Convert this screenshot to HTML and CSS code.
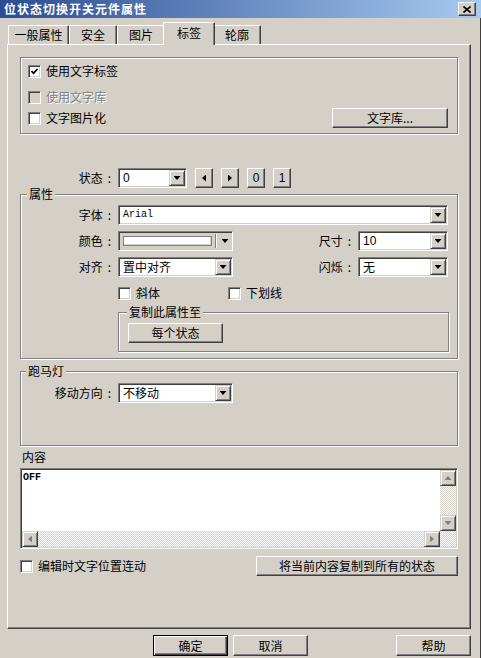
FILE: index.html
```html
<!DOCTYPE html>
<html lang="zh-CN">
  <head>
    <meta charset="UTF-8" />
    <title>位状态切换开关元件属性</title>
    <link rel="stylesheet" href="styles.css">
  </head>
  <body>
    <div class="titlebar">
      <span class="title">位状态切换开关元件属性</span>
      <span class="close">
        <svg width="8" height="7" viewBox="0 0 8 7"><path d="M0.5 0.5 L7.5 6.5 M7.5 0.5 L0.5 6.5" stroke="#000" stroke-width="1.6" fill="none"/></svg>
      </span>
    </div>

    <div class="window">
      <div class="tabs">
        <div class="tab first">一般属性</div>
        <div class="tab">安全</div>
        <div class="tab">图片</div>
        <div class="tab active">标签</div>
        <div class="tab">轮廓</div>
      </div>

      <div class="panel">
        <div class="group text-label">
          <div class="check-row">
            <span class="check">
              <svg width="7" height="7" viewBox="0 0 7 7"><path d="M0.5 3 L2.5 5.2 L6.5 1" stroke="#000" stroke-width="1.7" fill="none"/></svg>
            </span>
            使用文字标签
          </div>
          <div class="check-row disabled">
            <span class="check dim"></span>
            使用文字库
          </div>
          <div class="check-row split">
            <span class="check-item"><span class="check"></span>文字图片化</span>
            <button class="btn lib-btn">文字库...</button>
          </div>
        </div>

        <div class="field status-row">
          <span class="lbl">状态<span class="colon">:</span></span>
          <div class="combo w-state"><span class="val num">0</span><span class="drop"><i class="arr-down"></i></span></div>
          <button class="btn sq"><i class="arr-left"></i></button>
          <button class="btn sq"><i class="arr-right"></i></button>
          <button class="btn sq num">0</button>
          <button class="btn sq num">1</button>
        </div>

        <div class="group attr">
          <span class="legend">属性</span>
          <div class="field">
            <span class="lbl">字体<span class="colon">:</span></span>
            <div class="combo w-font"><span class="val mono">Arial</span><span class="drop"><i class="arr-down"></i></span></div>
          </div>
          <div class="field">
            <span class="lbl">颜色<span class="colon">:</span></span>
            <div class="combo color w-mid">
              <span class="swatch"></span>
              <span class="sep"></span>
              <span class="flat-drop"><i class="arr-down"></i></span>
            </div>
            <span class="lbl-r">尺寸<span class="colon">:</span></span>
            <div class="combo w-small"><span class="val num">10</span><span class="drop"><i class="arr-down"></i></span></div>
          </div>
          <div class="field">
            <span class="lbl">对齐<span class="colon">:</span></span>
            <div class="combo w-mid"><span class="val">置中对齐</span><span class="drop"><i class="arr-down"></i></span></div>
            <span class="lbl-r">闪烁<span class="colon">:</span></span>
            <div class="combo w-small"><span class="val">无</span><span class="drop"><i class="arr-down"></i></span></div>
          </div>
          <div class="check-row style-row">
            <span class="check-item italic-item"><span class="check"></span>斜体</span>
            <span class="check-item"><span class="check"></span>下划线</span>
          </div>
          <div class="group sub">
            <span class="legend">复制此属性至</span>
            <button class="btn each-btn">每个状态</button>
          </div>
        </div>

        <div class="group marquee">
          <span class="legend">跑马灯</span>
          <div class="field">
            <span class="lbl">移动方向<span class="colon">:</span></span>
            <div class="combo w-mid"><span class="val">不移动</span><span class="drop"><i class="arr-down"></i></span></div>
          </div>
        </div>

        <div class="content-lbl">内容</div>
        <div class="memo">
          <div class="memo-text">OFF</div>
          <div class="vscroll">
            <span class="sbtn"><i class="arr-up gray"></i></span>
            <span class="track"></span>
            <span class="sbtn"><i class="arr-down gray"></i></span>
          </div>
          <div class="hscroll">
            <span class="sbtn"><i class="arr-left gray"></i></span>
            <span class="track"></span>
            <span class="sbtn"><i class="arr-right gray"></i></span>
          </div>
          <div class="corner"></div>
        </div>

        <div class="check-row bottom-row">
          <span class="check-item"><span class="check"></span>编辑时文字位置连动</span>
          <button class="btn copy-btn">将当前内容复制到所有的状态</button>
        </div>
      </div>

      <div class="actions">
        <button class="btn act default">确定</button>
        <button class="btn act">取消</button>
        <button class="btn act help">帮助</button>
      </div>
    </div>
  </body>
</html>
```

FILE: styles.css
```css
* {
  padding: 0;
  margin: 0;
  box-sizing: border-box;
}

body {
  width: 481px;
  height: 658px;
  overflow: hidden;
  background: #d4d0c8;
  color: #000;
  font: 12px/14px "Noto Sans CJK SC", "Liberation Sans", sans-serif;
}

button {
  font: inherit;
  color: inherit;
}

/* title bar */
.titlebar {
  height: 18px;
  display: flex;
  align-items: center;
  justify-content: space-between;
  padding: 0 5px 0 4px;
  background: linear-gradient(to right, #2b4c92, #a6caf0);
}

.title {
  color: #fff;
  font-weight: bold;
  letter-spacing: 1px;
}

.close {
  width: 18px;
  height: 14px;
  display: flex;
  align-items: center;
  justify-content: center;
  background: #d4d0c8;
  border: 1px solid;
  border-color: #fff #404040 #404040 #fff;
  box-shadow: inset -1px -1px #808080;
}

.window {
  width: 481px;
  height: 640px;
  border-right: 1px solid #404040;
}

/* tabs */
.tabs {
  display: flex;
  align-items: flex-end;
  height: 26px;
  padding-left: 8px;
}

.tab {
  width: 48px;
  height: 19px;
  line-height: 18px;
  text-align: center;
  border: 1px solid;
  border-bottom: 0;
  border-color: #fff #404040 #fff #fff;
  box-shadow: inset -1px 0 #808080;
}

.tab.first {
  width: 61px;
}

.tab.active {
  position: relative;
  z-index: 1;
  width: 52px;
  height: 23px;
  line-height: 20px;
  margin: 0 -2px -1px;
  background: #d4d0c8;
}

.panel {
  margin-left: 7px;
  width: 464px;
  height: 585px;
  padding: 12px 0 0 12px;
  border: 1px solid;
  border-color: #fff #404040 #404040 #fff;
  box-shadow: inset -1px -1px #808080;
}

/* group boxes */
.group {
  position: relative;
  width: 438px;
  border: 1px solid #808080;
  box-shadow: inset 1px 1px #fff, 1px 1px #fff;
}

.legend {
  position: absolute;
  top: -8px;
  left: 6px;
  padding: 0 2px;
  line-height: 14px;
  background: #d4d0c8;
}

.text-label {
  height: 77px;
  padding: 5px 9px 0 7px;
}

.check-row {
  display: flex;
  align-items: center;
  gap: 5px;
  height: 16px;
}

.check-row.disabled {
  margin-top: 10px;
  color: #808080;
  text-shadow: 1px 1px #fff;
}

.check-row.split {
  margin-top: 3px;
  height: 20px;
  justify-content: space-between;
}

.check-item {
  display: flex;
  align-items: center;
  gap: 5px;
}

.check {
  flex: none;
  width: 13px;
  height: 13px;
  display: flex;
  align-items: center;
  justify-content: center;
  background: #fff;
  border: 1px solid;
  border-color: #808080 #fff #fff #808080;
  box-shadow: inset 1px 1px #404040, inset -1px -1px #d4d0c8;
}

.check.dim {
  background: #d4d0c8;
}

/* buttons */
.btn {
  height: 20px;
  background: #d4d0c8;
  border: 1px solid;
  border-color: #fff #404040 #404040 #fff;
  box-shadow: inset -1px -1px #808080;
  display: flex;
  align-items: center;
  justify-content: center;
}

.lib-btn {
  width: 116px;
}

.sq {
  width: 18px;
  margin-left: 8px;
}

.num {
  font-family: "Liberation Sans", sans-serif;
}

.mono {
  font-family: "Liberation Mono", monospace;
  font-size: 10px;
}

/* fields */
.field {
  display: flex;
  align-items: center;
  height: 20px;
}

.lbl {
  width: 98px;
  text-align: right;
  padding-right: 7px;
}

.colon {
  margin-left: 5px;
}

.group .lbl {
  width: 97px;
}

.lbl-r {
  width: 125px;
  text-align: right;
  padding-right: 7px;
}

.status-row {
  margin-top: 34px;
}

.combo {
  display: flex;
  align-items: center;
  height: 20px;
  padding: 1px;
  background: #fff;
  border: 1px solid;
  border-color: #808080 #fff #fff #808080;
  box-shadow: inset 1px 1px #404040, inset -1px -1px #d4d0c8;
}

.combo .val {
  flex: 1;
  padding-left: 3px;
  line-height: 16px;
  white-space: nowrap;
}

.drop {
  flex: none;
  width: 16px;
  height: 16px;
  display: flex;
  align-items: center;
  justify-content: center;
  background: #d4d0c8;
  border: 1px solid;
  border-color: #d4d0c8 #404040 #404040 #d4d0c8;
  box-shadow: inset 1px 1px #fff, inset -1px -1px #808080;
}

.w-state { width: 69px; }
.w-font { width: 330px; }
.w-mid { width: 115px; }
.w-small { width: 90px; }

.combo.color {
  background: #d4d0c8;
  padding: 2px 2px 2px 4px;
}

.swatch {
  flex: 1;
  height: 10px;
  background: #fff;
  border: 1px solid #808080;
  box-shadow: inset -1px -1px #d4d0c8;
}

.sep {
  width: 2px;
  height: 14px;
  margin: 0 3px;
  border-left: 1px solid #808080;
  border-right: 1px solid #fff;
}

.flat-drop {
  width: 10px;
  display: flex;
  justify-content: center;
}

.arr-down,
.arr-up,
.arr-left,
.arr-right {
  display: block;
  background: #000;
}

.arr-down {
  width: 7px;
  height: 4px;
  clip-path: polygon(0 0, 100% 0, 50% 100%);
}

.arr-up {
  width: 7px;
  height: 4px;
  clip-path: polygon(50% 0, 100% 100%, 0 100%);
}

.arr-left {
  width: 4px;
  height: 7px;
  clip-path: polygon(100% 0, 100% 100%, 0 50%);
}

.arr-right {
  width: 4px;
  height: 7px;
  clip-path: polygon(0 0, 100% 50%, 0 100%);
}

.gray {
  background: #808080;
}

/* attribute group */
.attr {
  height: 165px;
  margin-top: 6px;
  padding-top: 10px;
}

.attr .field + .field {
  margin-top: 6px;
}

.style-row {
  margin-top: 8px;
  padding-left: 97px;
  gap: 0;
}

.italic-item {
  width: 110px;
}

.sub {
  width: 331px;
  height: 40px;
  margin: 11px 0 0 97px;
  padding: 10px 0 0 9px;
}

.sub .legend {
  left: 8px;
}

.each-btn {
  width: 95px;
}

/* marquee */
.marquee {
  height: 75px;
  margin-top: 12px;
  padding-top: 11px;
}

.marquee .legend {
  left: 5px;
}

/* content */
.content-lbl {
  margin-top: 4px;
  padding-left: 2px;
}

.memo {
  width: 438px;
  height: 81px;
  margin-top: 4px;
  padding: 1px;
  display: grid;
  grid-template-columns: 1fr 16px;
  grid-template-rows: 1fr 16px;
  background: #fff;
  border: 1px solid;
  border-color: #808080 #fff #fff #808080;
  box-shadow: inset 1px 1px #404040, inset -1px -1px #d4d0c8;
}

.memo-text {
  padding: 2px 0 0 1px;
  font: bold 10px/12px "Liberation Mono", monospace;
}

.track,
.corner {
  background: repeating-conic-gradient(#fff 0 25%, #d4d0c8 0 50%) 0 0 / 2px 2px;
}

.vscroll {
  display: flex;
  flex-direction: column;
}

.hscroll {
  display: flex;
}

.track {
  flex: 1;
}

.sbtn {
  flex: none;
  width: 16px;
  height: 16px;
  display: flex;
  align-items: center;
  justify-content: center;
  background: #d4d0c8;
  border: 1px solid;
  border-color: #d4d0c8 #404040 #404040 #d4d0c8;
  box-shadow: inset 1px 1px #fff, inset -1px -1px #808080;
}

.bottom-row {
  width: 438px;
  height: 20px;
  margin-top: 7px;
  justify-content: space-between;
}

.copy-btn {
  width: 202px;
}

/* dialog buttons */
.actions {
  display: flex;
  gap: 5px;
  margin-top: 6px;
  padding: 0 9px 0 153px;
}

.act {
  width: 75px;
  height: 21px;
}

.act.default {
  border-color: #000;
  box-shadow: inset 1px 1px #fff, inset -1px -1px #404040, inset -2px -2px #808080;
}

.act.help {
  margin-left: auto;
}
```
